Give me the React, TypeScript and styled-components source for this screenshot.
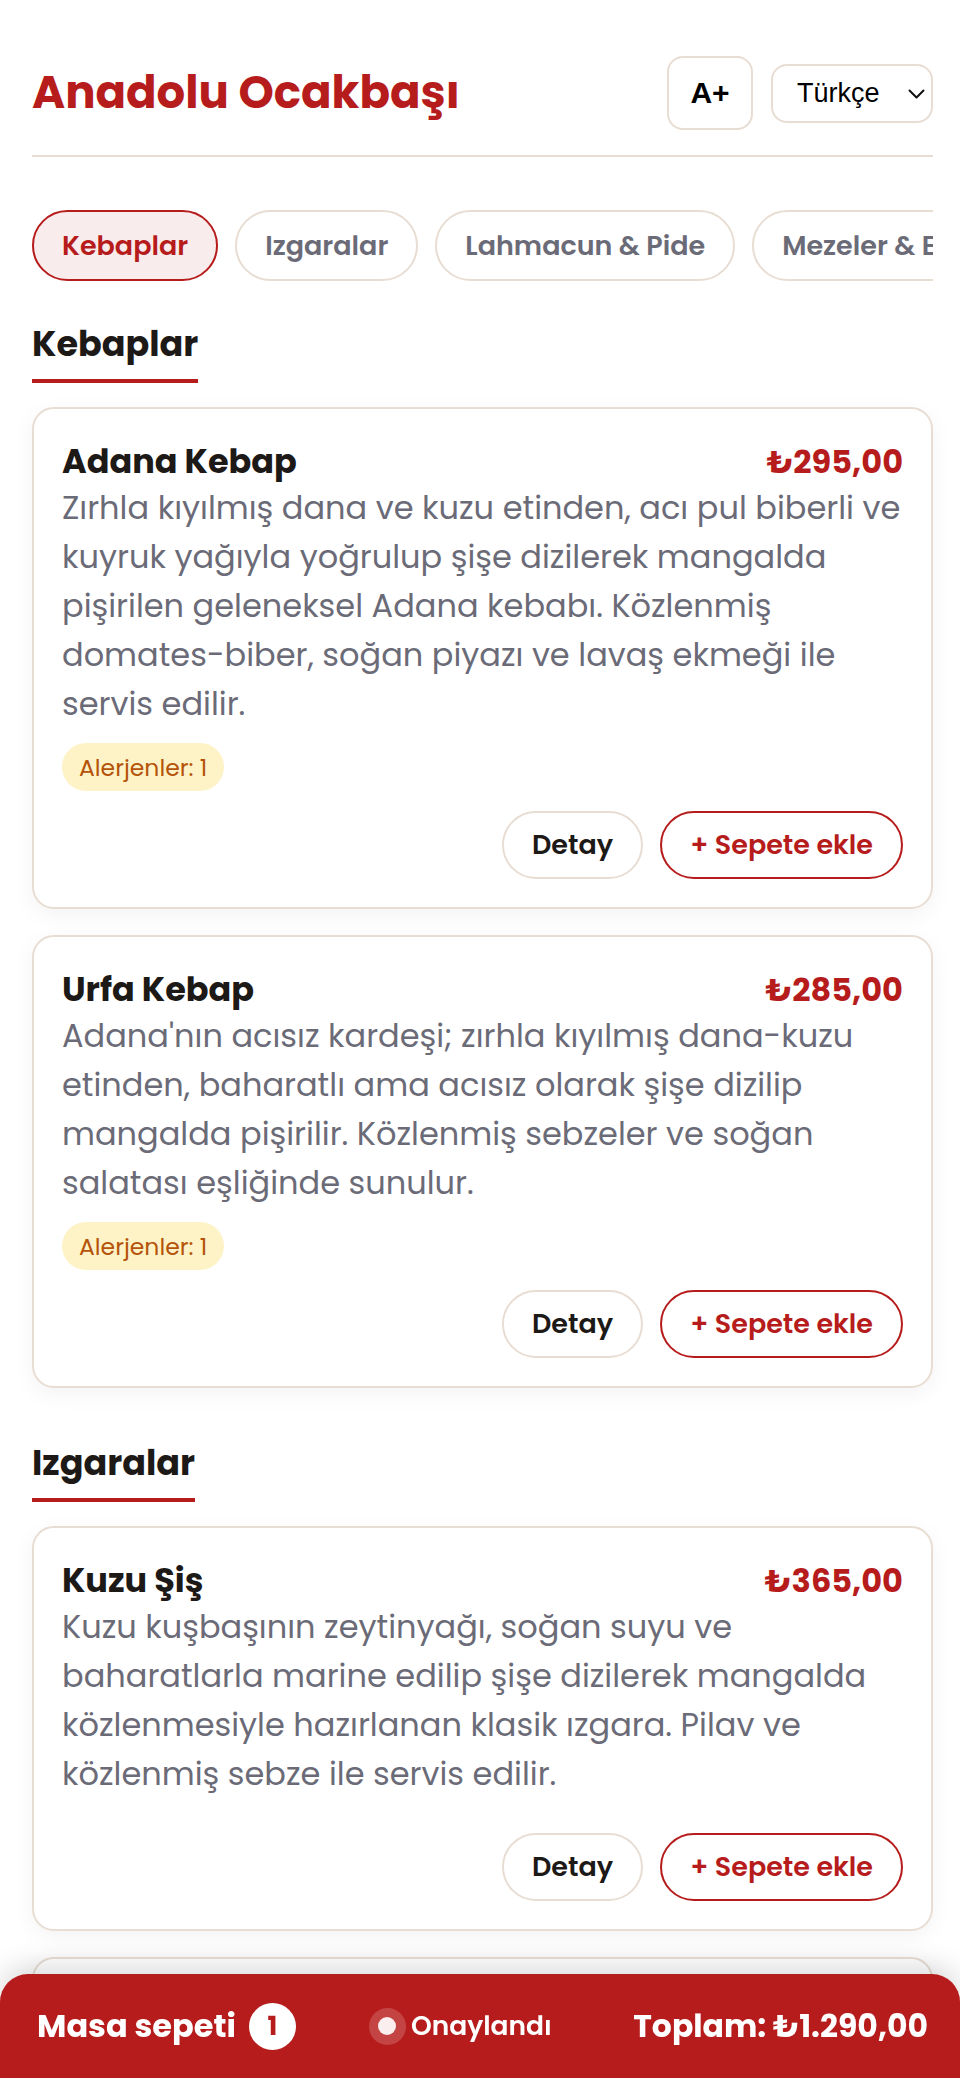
import React, { useState } from 'react';
import styled, { createGlobalStyle } from 'styled-components';

const GlobalStyle = createGlobalStyle`
  html {
    scrollbar-width: none;
  }
  body {
    margin: 0;
    background: #ffffff;
    font-family: "Poppins", "Open Sans", sans-serif;
    color: #1c1917;
  }
  * {
    box-sizing: border-box;
  }
`;

const RED = '#b71c1c';
const BEIGE = '#e8ddd3';

type Item = {
    name: string;
    price: string;
    description: string;
    allergens?: number;
};

type Section = {
    title: string;
    items: Item[];
};

const categories = ['Kebaplar', 'Izgaralar', 'Lahmacun & Pide', 'Mezeler & Ekmekler', 'Tatlılar'];

const sections: Section[] = [
    {
        title: 'Kebaplar',
        items: [
            {
                name: 'Adana Kebap',
                price: '₺295,00',
                description:
                    'Zırhla kıyılmış dana ve kuzu etinden, acı pul biberli ve kuyruk yağıyla yoğrulup şişe dizilerek mangalda pişirilen geleneksel Adana kebabı. Közlenmiş domates-biber, soğan piyazı ve lavaş ekmeği ile servis edilir.',
                allergens: 1,
            },
            {
                name: 'Urfa Kebap',
                price: '₺285,00',
                description:
                    "Adana'nın acısız kardeşi; zırhla kıyılmış dana-kuzu etinden, baharatlı ama acısız olarak şişe dizilip mangalda pişirilir. Közlenmiş sebzeler ve soğan salatası eşliğinde sunulur.",
                allergens: 1,
            },
        ],
    },
    {
        title: 'Izgaralar',
        items: [
            {
                name: 'Kuzu Şiş',
                price: '₺365,00',
                description:
                    'Kuzu kuşbaşının zeytinyağı, soğan suyu ve baharatlarla marine edilip şişe dizilerek mangalda közlenmesiyle hazırlanan klasik ızgara. Pilav ve közlenmiş sebze ile servis edilir.',
            },
            {
                name: 'Tavuk Şiş',
                price: '₺245,00',
                description:
                    'Yoğurt ve baharatlarla marine edilmiş tavuk göğsü, şişte mangalda pişirilir. Bulgur pilavı ve közlenmiş biber ile servis edilir.',
            },
        ],
    },
];

export default function App() {
    const [active, setActive] = useState('Kebaplar');

    return (
        <>
            <GlobalStyle />
            <Page>
                <Header>
                    <Brand>Anadolu Ocakbaşı</Brand>
                    <Controls>
                        <FontButton>A+</FontButton>
                        <SelectWrap>
                            <LangSelect defaultValue="tr">
                                <option value="tr">Türkçe</option>
                                <option value="en">English</option>
                            </LangSelect>
                            <Chevron width="17" height="10" viewBox="0 0 17 10" fill="none">
                                <path d="M1.5 1.5L8.5 8.5L15.5 1.5" stroke="#111" strokeWidth="2" strokeLinecap="round" strokeLinejoin="round" />
                            </Chevron>
                        </SelectWrap>
                    </Controls>
                </Header>

                <CategoryNav>
                    {categories.map((c) => (
                        <Pill key={c} $active={c === active} onClick={() => setActive(c)}>
                            {c}
                        </Pill>
                    ))}
                </CategoryNav>

                {sections.map((section) => (
                    <MenuSection key={section.title}>
                        <SectionTitle>{section.title}</SectionTitle>
                        {section.items.map((item) => (
                            <Card key={item.name}>
                                <CardHead>
                                    <ItemName>{item.name}</ItemName>
                                    <Price>{item.price}</Price>
                                </CardHead>
                                <Description>{item.description}</Description>
                                <Tags>
                                    {item.allergens ? <AllergenChip>Alerjenler: {item.allergens}</AllergenChip> : null}
                                </Tags>
                                <Actions>
                                    <GhostButton>Detay</GhostButton>
                                    <AddButton>+ Sepete ekle</AddButton>
                                </Actions>
                            </Card>
                        ))}
                    </MenuSection>
                ))}
            </Page>

            <CartBar>
                <CartLeft>
                    <CartTitle>Masa sepeti</CartTitle>
                    <CountBadge>1</CountBadge>
                </CartLeft>
                <Status>
                    <StatusDot />
                    Onaylandı
                </Status>
                <Total>Toplam: ₺1.290,00</Total>
            </CartBar>
        </>
    );
}

const Page = styled.div`
    padding: 0 27px 140px 32px;
`;

const Header = styled.header`
    display: flex;
    align-items: center;
    justify-content: space-between;
    padding: 56px 0 25px;
    border-bottom: 2px solid ${BEIGE};
`;

const Brand = styled.h1`
    margin: 0;
    font-size: 45px;
    font-weight: 700;
    color: ${RED};
    line-height: 1.2;
`;

const Controls = styled.div`
    display: flex;
    align-items: center;
    gap: 18px;
`;

const FontButton = styled.button`
    width: 86px;
    height: 74px;
    border: 2px solid ${BEIGE};
    border-radius: 16px;
    background: #fff;
    font-family: "Liberation Sans", Arial, sans-serif;
    font-weight: 700;
    font-size: 30px;
    color: #000;
    cursor: pointer;
`;

const SelectWrap = styled.div`
    position: relative;
`;

const LangSelect = styled.select`
    appearance: none;
    width: 162px;
    height: 59px;
    padding: 0 40px 0 24px;
    border: 2px solid ${BEIGE};
    border-radius: 16px;
    background: #fff;
    font-family: "Liberation Sans", Arial, sans-serif;
    font-size: 27px;
    color: #000;
`;

const Chevron = styled.svg`
    position: absolute;
    right: 8px;
    top: 25px;
    pointer-events: none;
`;

const CategoryNav = styled.nav`
    display: flex;
    gap: 17px;
    margin-top: 53px;
    padding-bottom: 14px;
    overflow-x: auto;
    scrollbar-width: none;
`;

const Pill = styled.button<{ $active?: boolean }>`
    flex: none;
    height: 71px;
    padding: 0 28px;
    border-radius: 999px;
    border: 2px solid ${(p) => (p.$active ? RED : BEIGE)};
    background: ${(p) => (p.$active ? '#f9ecec' : '#fff')};
    color: ${(p) => (p.$active ? RED : '#6b6b78')};
    font-family: inherit;
    font-size: 27px;
    font-weight: 600;
    cursor: pointer;
`;

const MenuSection = styled.section`
    padding-top: 28px;
`;

const SectionTitle = styled.h2`
    display: inline-block;
    margin: 0 0 24px;
    padding-bottom: 14px;
    border-bottom: 4px solid ${RED};
    font-size: 35px;
    font-weight: 700;
    line-height: 1.2;
    color: #1c1917;
`;

const Card = styled.article`
    margin-bottom: 26px;
    padding: 33px 28px 28px;
    border: 2px solid ${BEIGE};
    border-radius: 22px;
    background: #fff;
    box-shadow: 0 6px 22px rgba(0, 0, 0, 0.05);
`;

const CardHead = styled.div`
    display: flex;
    justify-content: space-between;
    align-items: baseline;
    gap: 16px;
`;

const ItemName = styled.h3`
    margin: 0;
    font-size: 33.5px;
    font-weight: 700;
    line-height: 40px;
    color: #1c1917;
`;

const Price = styled.span`
    font-size: 32px;
    font-weight: 700;
    line-height: 40px;
    color: ${RED};
`;

const Description = styled.p`
    margin: 1px 0 0;
    font-size: 32px;
    line-height: 49px;
    color: #6b6b78;
`;

const Tags = styled.div`
    display: flex;
    gap: 10px;
    margin-top: 15px;
`;

const AllergenChip = styled.span`
    display: inline-flex;
    align-items: center;
    height: 48px;
    padding: 0 17px;
    border-radius: 999px;
    background: #fef3c7;
    color: #b45309;
    font-size: 23.5px;
`;

const Actions = styled.div`
    display: flex;
    justify-content: flex-end;
    gap: 17px;
    margin-top: 20px;
`;

const GhostButton = styled.button`
    height: 68px;
    padding: 0 28px;
    border-radius: 999px;
    border: 2px solid ${BEIGE};
    background: #fff;
    color: #1c1917;
    font-family: inherit;
    font-size: 27px;
    font-weight: 600;
    cursor: pointer;
`;

const AddButton = styled(GhostButton)`
    border-color: ${RED};
    color: ${RED};
`;

const CartBar = styled.footer`
    position: fixed;
    left: 0;
    right: 0;
    bottom: 0;
    height: 104px;
    display: flex;
    align-items: center;
    padding: 0 32px 0 37px;
    background: ${RED};
    border-radius: 28px 28px 0 0;
    box-shadow: 0 -8px 28px rgba(0, 0, 0, 0.14);
    color: #fff;
`;

const CartLeft = styled.div`
    display: flex;
    align-items: center;
    gap: 13px;
`;

const CartTitle = styled.span`
    font-size: 32px;
    font-weight: 700;
`;

const CountBadge = styled.span`
    display: inline-flex;
    align-items: center;
    justify-content: center;
    width: 47px;
    height: 47px;
    border-radius: 50%;
    background: #fff;
    color: ${RED};
    font-size: 26px;
    font-weight: 700;
`;

const Status = styled.div`
    display: flex;
    align-items: center;
    gap: 5px;
    margin-left: 73px;
    font-size: 26.5px;
    font-weight: 600;
`;

const StatusDot = styled.span`
    width: 37px;
    height: 37px;
    border-radius: 50%;
    background: rgba(255, 255, 255, 0.18);
    display: inline-flex;
    align-items: center;
    justify-content: center;
    &::after {
        content: '';
        width: 18px;
        height: 18px;
        border-radius: 50%;
        background: #fbeeee;
    }
`;

const Total = styled.span`
    margin-left: auto;
    font-size: 31.5px;
    font-weight: 700;
`;
